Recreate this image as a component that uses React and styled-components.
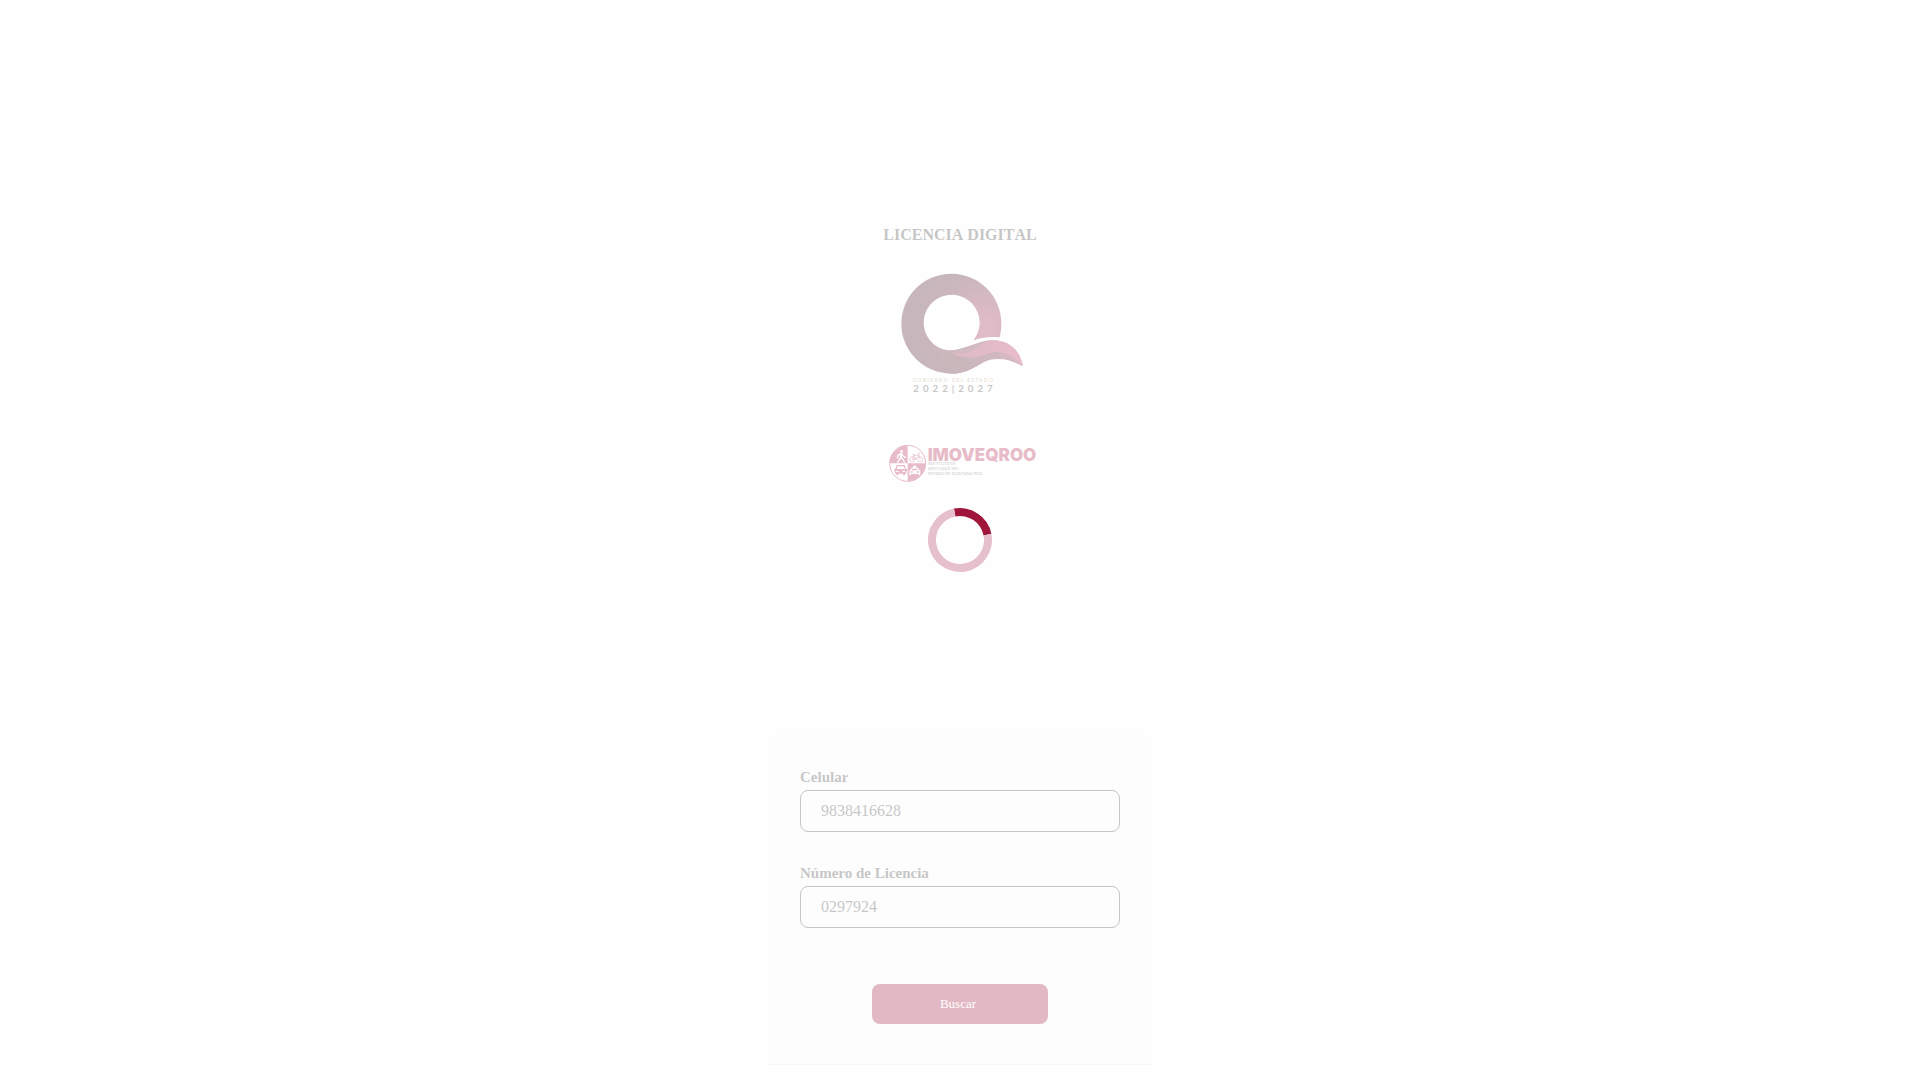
import React, { useState } from "react";
import styled, { createGlobalStyle } from "styled-components";

const GlobalStyle = createGlobalStyle`
  * {
    box-sizing: border-box;
  }
  body {
    margin: 0;
    background: #fcfcfc;
    color: #404040;
    font-family: "Liberation Serif", "Times New Roman", serif;
    font-size: 16px;
    line-height: 24px;
  }
`;

const Page = styled.main`
  display: flex;
  flex-direction: column;
  align-items: center;
  min-height: 100vh;
  padding: 223px 16px 14px;
`;

const Title = styled.h1`
  margin: 0 0 24px;
  font-size: 16px;
  line-height: 24px;
  font-weight: bold;
  font-kerning: none;
`;

const StateLogo = styled.svg`
  display: block;
  width: 128px;
  height: 125px;
  margin-bottom: 48px;
`;

const InstituteLogo = styled.svg`
  display: block;
  width: 154px;
  height: 40px;
  margin-bottom: 248px;
`;

const Card = styled.form`
  display: flex;
  flex-direction: column;
  width: 100%;
  max-width: 384px;
  padding: 32px 32px 40px;
  background: #f9f9f9;
  border-bottom: 1px solid #e5e5e5;
  border-radius: 16px 16px 0 0;
`;

const Field = styled.div`
  display: flex;
  flex-direction: column;
  margin-bottom: 28px;
`;

const Label = styled.label`
  font-size: 15px;
  line-height: 26px;
  font-weight: bold;
`;

const Input = styled.input`
  width: 100%;
  height: 42px;
  padding: 0 20px;
  border: 1px solid #404040;
  border-radius: 8px;
  background: transparent;
  color: inherit;
  font: inherit;
`;

const SearchButton = styled.button`
  align-self: center;
  width: 176px;
  height: 40px;
  margin-top: 28px;
  padding: 0 4px 0 0;
  border: 0;
  border-radius: 8px;
  background: #9f1239;
  color: #fff;
  font-family: inherit;
  font-size: 13px;
  cursor: pointer;
`;

const Overlay = styled.div`
  position: fixed;
  inset: 0;
  z-index: 10;
  display: flex;
  align-items: center;
  justify-content: center;
  background: rgba(255, 255, 255, 0.7);
`;

const Spinner = styled.div`
  width: 64px;
  height: 64px;
  border: 8px solid #e6c0cc;
  border-top-color: #a0153a;
  border-radius: 50%;
  transform: rotate(34deg);
`;

const QuintanaRooLogo = () => (
  <StateLogo viewBox="108 183 384 375" role="img" aria-label="Gobierno del Estado">
    <defs>
      <radialGradient id="ring" gradientUnits="userSpaceOnUse" cx="375" cy="350" r="200">
        <stop offset="0" stopColor="#9a1f47" />
        <stop offset="0.3" stopColor="#82183a" />
        <stop offset="0.8" stopColor="#4e0e20" />
        <stop offset="1" stopColor="#440c1b" />
      </radialGradient>
      <linearGradient id="wave" x1="0" y1="0" x2="1" y2="0">
        <stop offset="0" stopColor="#8a1a3c" />
        <stop offset="1" stopColor="#b51e54" />
      </linearGradient>
      <linearGradient id="tail" x1="0" y1="0" x2="1" y2="0">
        <stop offset="0.3" stopColor="#4e0e20" />
        <stop offset="1" stopColor="#7c1838" />
      </linearGradient>
    </defs>
    <path
      fill="url(#ring)"
      d="M419 382C422 369 424 355 424 341A150 150 0 1 0 274 491C310 491 335 478 354 465L262 421A84 84 0 1 1 359 337C359 358 352 375 340 391C365 382 391 380 419 382Z"
    />
    <path
      fill="url(#tail)"
      d="M262 421C310 424 349 393 398 391C450 392 480 422 489 469C457 451 410 436 368 458C350 468 316 491 274 491C250 470 240 440 262 421Z"
    />
    <path
      fill="#6d1431"
      d="M262 421C310 424 349 393 398 391L383 421C345 428 315 440 262 421Z"
    />
    <path
      fill="url(#wave)"
      d="M270 424C300 449 345 447 383 431C420 416 458 434 489 469C480 422 450 392 398 391C375 394 360 407 345 418C325 431 298 434 270 424Z"
    />
    <text x="159" y="515" fontFamily="Lato, sans-serif" fontSize="14" letterSpacing="4.4" fill="#96794a">
      GOBIERNO DEL ESTADO
    </text>
    <text x="160" y="545" fontFamily="Lato, sans-serif" fontSize="29" fontWeight="bold" letterSpacing="12" fill="#3d4044">
      2022|2027
    </text>
  </StateLogo>
);

const ImoveqrooLogo = () => (
  <InstituteLogo viewBox="39 72 462 120" role="img" aria-label="IMOVEQROO">
    <circle cx="113" cy="130" r="54" fill="#fff" stroke="#b11c4b" strokeWidth="3" />
    <path fill="#b11c4b" d="M113 130V76A54 54 0 0 0 59 130ZM113 130V184A54 54 0 0 0 167 130Z" />
    <circle cx="95" cy="94" r="4" fill="#fff" />
    <path
      fill="none"
      stroke="#fff"
      strokeWidth="4"
      strokeLinecap="round"
      strokeLinejoin="round"
      d="M93 101L92 113L83 127M92 113L99 118L103 127M92 101L84 106L82 114M95 102L100 109L106 112"
    />
    <path fill="none" stroke="#fff" strokeWidth="6" d="M94 101L92 113" />
    <g fill="none" stroke="#b11c4b" strokeWidth="2">
      <circle cx="126" cy="118" r="8" />
      <circle cx="151" cy="118" r="8" />
      <path d="M126 118L132 106H147L138 118H126M131 104L138 118M145 100L151 118M145 100H151M128 103H135" />
    </g>
    <path
      fill="#b11c4b"
      fillRule="evenodd"
      d="M80 135H104L108 147H112V154H109V161H105V166H99V161H85V166H79V161H75V154H73V147H76ZM83 139L80 147H105L101 139ZM79 152H86V156H79ZM98 152H105V156H98Z"
    />
    <path
      fill="#fff"
      fillRule="evenodd"
      d="M129 137H139V143H144L148 151H151V166H146V162H123V166H118V151H121L125 143H129ZM127 146L125 151H143L141 146ZM122 154H128V158H122ZM140 154H147V158H140Z"
    />
    <text x="173" y="122" fontFamily="Inter, sans-serif" fontSize="51" fontWeight="900" fill="#b11c4b">
      IMOVEQROO
    </text>
    <g fontFamily="Inter, sans-serif" fontSize="12" fontWeight="500" fill="#666">
      <text x="174" y="136">INSTITUTO DE</text>
      <text x="174" y="150">MOVILIDAD DEL</text>
      <text x="174" y="164">ESTADO DE QUINTANA ROO</text>
    </g>
  </InstituteLogo>
);

const App = () => {
  const [phone, setPhone] = useState("9838416628");
  const [license, setLicense] = useState("0297924");

  return (
    <>
      <GlobalStyle />
      <Page>
        <Title>LICENCIA DIGITAL</Title>
        <QuintanaRooLogo />
        <ImoveqrooLogo />
        <Card onSubmit={e => e.preventDefault()}>
          <Field>
            <Label htmlFor="phone">Celular</Label>
            <Input id="phone" value={phone} onChange={e => setPhone(e.target.value)} />
          </Field>
          <Field>
            <Label htmlFor="license">Número de Licencia</Label>
            <Input id="license" value={license} onChange={e => setLicense(e.target.value)} />
          </Field>
          <SearchButton type="submit">Buscar</SearchButton>
        </Card>
      </Page>
      <Overlay>
        <Spinner role="status" aria-busy="true" />
      </Overlay>
    </>
  );
};

export default App;
